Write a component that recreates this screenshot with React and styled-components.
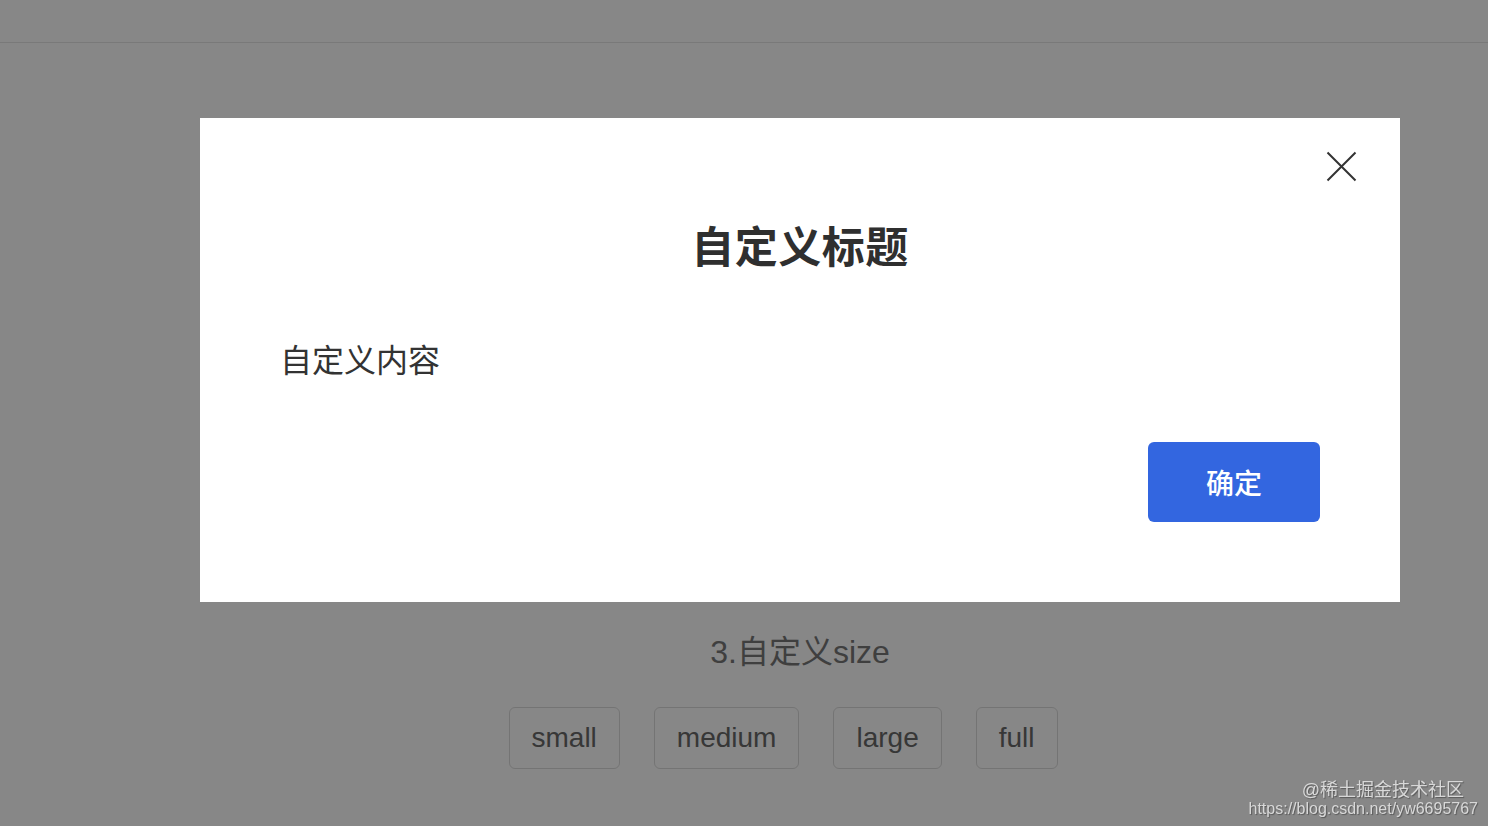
import React from "react";
import styled, { createGlobalStyle } from "styled-components";

const Global = createGlobalStyle`
  html, body { margin: 0; padding: 0; background: #fff; }
  body {
    font-family: "Helvetica Neue", "Liberation Sans", "Noto Sans CJK SC", sans-serif;
    overflow: hidden;
  }
`;

const Page = styled.div`
  width: 1488px;
  height: 826px;
  display: flex;
  flex-direction: column;
`;

const TopBar = styled.header`
  height: 42px;
  border-bottom: 1px solid #e4e4e4;
  flex-shrink: 0;
`;

const Content = styled.main`
  padding-left: 112px;
  padding-top: 587px;
  display: flex;
  flex-direction: column;
  align-items: center;
`;

const SectionTitle = styled.h3`
  margin: 0;
  font-size: 32px;
  line-height: 44px;
  font-weight: 400;
  color: #777;
`;

const SizeRow = styled.div`
  display: flex;
  margin-top: 33px;
`;

const SizeButton = styled.button`
  height: 62px;
  margin-right: 34px;
  padding: 0 22px;
  border: 1px solid #dcdcdc;
  border-radius: 6px;
  background: #fff;
  color: #686868;
  font-family: inherit;
  font-size: 28px;
`;

const Overlay = styled.div`
  position: fixed;
  inset: 0;
  background: rgba(0, 0, 0, 0.47);
  padding: 118px 0 0 200px;
  box-sizing: border-box;
`;

const Modal = styled.div`
  position: relative;
  width: 1200px;
  box-sizing: border-box;
  background: #fff;
  padding: 100px 80px 80px 80px;
  display: flex;
  flex-direction: column;
`;

const CloseButton = styled.button`
  position: absolute;
  top: 33px;
  right: 43px;
  width: 31px;
  height: 31px;
  padding: 0;
  border: none;
  background: transparent;
  display: flex;
`;

const ModalTitle = styled.h2`
  margin: 0;
  text-align: center;
  font-size: 43px;
  line-height: 60px;
  font-weight: 700;
  color: #2f2f2f;
  letter-spacing: 0.5px;
`;

const ModalBody = styled.p`
  margin: 61px 0 0;
  font-size: 32px;
  line-height: 44px;
  color: #333;
`;

const Footer = styled.div`
  display: flex;
  justify-content: flex-end;
  margin-top: 59px;
`;

const PrimaryButton = styled.button`
  width: 172px;
  height: 80px;
  border: none;
  border-radius: 6px;
  background: #3366e0;
  color: #fff;
  font-family: inherit;
  font-size: 28px;
  font-weight: 500;
`;

const Watermark = styled.div`
  position: fixed;
  right: 10px;
  bottom: 8px;
  display: flex;
  flex-direction: column;
  align-items: flex-end;
  color: #d8d8d8;
  text-shadow: 1px 1px 1px rgba(0, 0, 0, 0.35);
  font-family: "Liberation Sans", "Noto Sans CJK SC", sans-serif;
`;

const MarkLine = styled.span`
  font-size: ${(p) => p.size}px;
  line-height: ${(p) => p.lh}px;
  margin-right: ${(p) => p.mr || 0}px;
`;

const CloseIcon = () => (
  <svg width="31" height="31" viewBox="0 0 31 31">
    <path d="M1.5 1.5 L29.5 29.5 M29.5 1.5 L1.5 29.5" stroke="#333" strokeWidth="2" fill="none" />
  </svg>
);

export default function App() {
  return (
    <>
      <Global />
      <Page>
        <TopBar />
        <Content>
          <SectionTitle>3.自定义size</SectionTitle>
          <SizeRow>
            <SizeButton>small</SizeButton>
            <SizeButton>medium</SizeButton>
            <SizeButton>large</SizeButton>
            <SizeButton>full</SizeButton>
          </SizeRow>
        </Content>
      </Page>
      <Overlay>
        <Modal>
          <CloseButton aria-label="close">
            <CloseIcon />
          </CloseButton>
          <ModalTitle>自定义标题</ModalTitle>
          <ModalBody>自定义内容</ModalBody>
          <Footer>
            <PrimaryButton>确定</PrimaryButton>
          </Footer>
        </Modal>
      </Overlay>
      <Watermark>
        <MarkLine size={18} lh={20} mr={14}>@稀土掘金技术社区</MarkLine>
        <MarkLine size={16} lh={18}>https://blog.csdn.net/yw6695767</MarkLine>
      </Watermark>
    </>
  );
}
